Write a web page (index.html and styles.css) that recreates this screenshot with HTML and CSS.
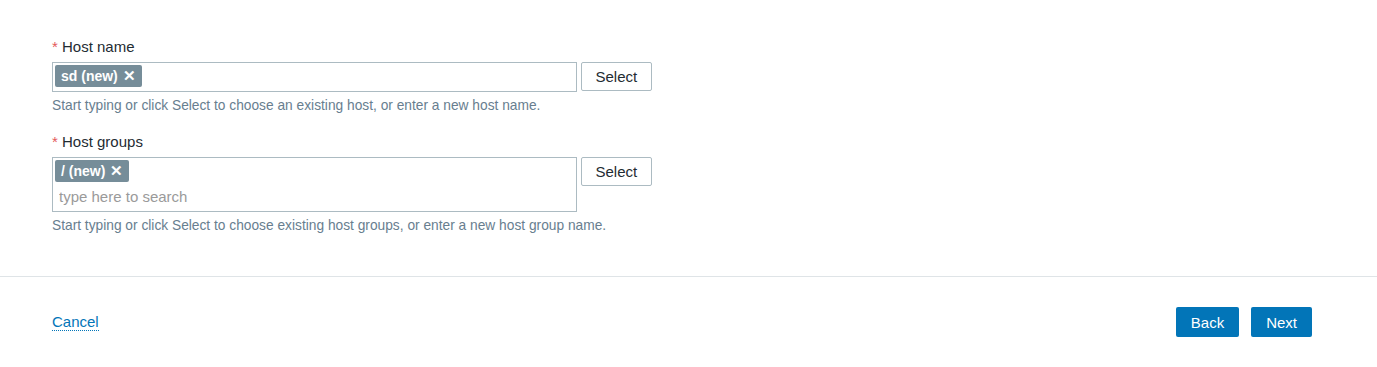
FILE: index.html
```html
<!DOCTYPE html>
<html lang="en">
<head>
<meta charset="UTF-8">
<meta name="viewport" content="width=device-width, initial-scale=1.0">
<title>New host</title>
<link rel="stylesheet" href="styles.css">
</head>
<body>

<div class="wizard">
    <form class="host-form" action="#" method="post">
        <div class="field">
            <label class="field-label" for="hostName"><span class="required">*</span> Host name</label>
            <div class="field-row">
                <div class="multiselect">
                    <div class="chips">
                        <span class="chip">sd (new) <span class="chip-remove">&#x2715;</span></span>
                        <input type="text" id="hostName" class="chip-input">
                    </div>
                </div>
                <button type="button" class="btn-alt">Select</button>
            </div>
            <div class="hint">Start typing or click Select to choose an existing host, or enter a new host name.</div>
        </div>

        <div class="field">
            <label class="field-label" for="hostGroups"><span class="required">*</span> Host groups</label>
            <div class="field-row">
                <div class="multiselect">
                    <div class="chips">
                        <span class="chip">/ (new) <span class="chip-remove">&#x2715;</span></span>
                    </div>
                    <input type="text" id="hostGroups" class="search-input" placeholder="type here to search">
                </div>
                <button type="button" class="btn-alt">Select</button>
            </div>
            <div class="hint">Start typing or click Select to choose existing host groups, or enter a new host group name.</div>
        </div>
    </form>

    <div class="wizard-footer">
        <a href="#" class="link-cancel">Cancel</a>
        <div class="nav-buttons">
            <button type="button" class="btn-primary">Back</button>
            <button type="button" class="btn-primary">Next</button>
        </div>
    </div>
</div>

</body>
</html>
```

FILE: styles.css
```css
/* Host wizard step */
body {
    font-family: Arial, "Liberation Sans", sans-serif;
    font-size: 15px;
    color: #1f2c33;
    background-color: #fff;
    margin: 0;
}

.host-form {
    padding: 37px 52px 0;
}

.field {
    margin-bottom: 18px;
}

.field:last-child {
    margin-bottom: 0;
}

.field-label {
    display: block;
    line-height: 19px;
    margin-bottom: 6px;
}

.required {
    color: #e45959;
}

.field-row {
    display: flex;
    align-items: flex-start;
    gap: 4px;
}

.multiselect {
    width: 525px;
    box-sizing: border-box;
    border: 1px solid #acbbc2;
    padding: 2px;
    min-height: 30px;
}

.chips {
    display: flex;
    align-items: center;
    gap: 4px;
}

.chip {
    display: inline-flex;
    align-items: center;
    gap: 5px;
    height: 22px;
    padding: 0 6px;
    border-radius: 2px;
    background-color: #768d99;
    color: #fff;
    font-size: 14px;
    font-weight: bold;
    white-space: nowrap;
}

.chip-remove {
    font-size: 15px;
    font-weight: bold;
}

.chip-input {
    flex: 1;
    border: none;
    outline: none;
    font: inherit;
    height: 22px;
    padding: 0;
}

.search-input {
    display: block;
    width: 100%;
    box-sizing: border-box;
    border: none;
    outline: none;
    font: inherit;
    height: 26px;
    padding: 0 4px;
    margin-top: 1px;
}

.search-input::placeholder {
    color: #9a9a9a;
}

.btn-alt {
    height: 29px;
    padding: 0 13.5px;
    font: inherit;
    color: #1f2c33;
    background-color: #fff;
    border: 1px solid #acbbc2;
    border-radius: 2px;
    cursor: pointer;
}

.hint {
    margin-top: 6px;
    font-size: 13.75px;
    line-height: 16px;
    color: #687e8f;
}

.wizard-footer {
    margin-top: 42px;
    border-top: 1px solid #dfe4e7;
    padding: 30px 65px 30px 52px;
    display: flex;
    justify-content: space-between;
    align-items: center;
}

.link-cancel {
    color: #0275b8;
    text-decoration: none;
    border-bottom: 1px dotted #0275b8;
    line-height: 17px;
}

.nav-buttons {
    display: flex;
    gap: 12px;
}

.btn-primary {
    height: 30px;
    padding: 0 15px;
    font: inherit;
    color: #fff;
    background-color: #0275b8;
    border: none;
    border-radius: 2px;
    cursor: pointer;
}
```
